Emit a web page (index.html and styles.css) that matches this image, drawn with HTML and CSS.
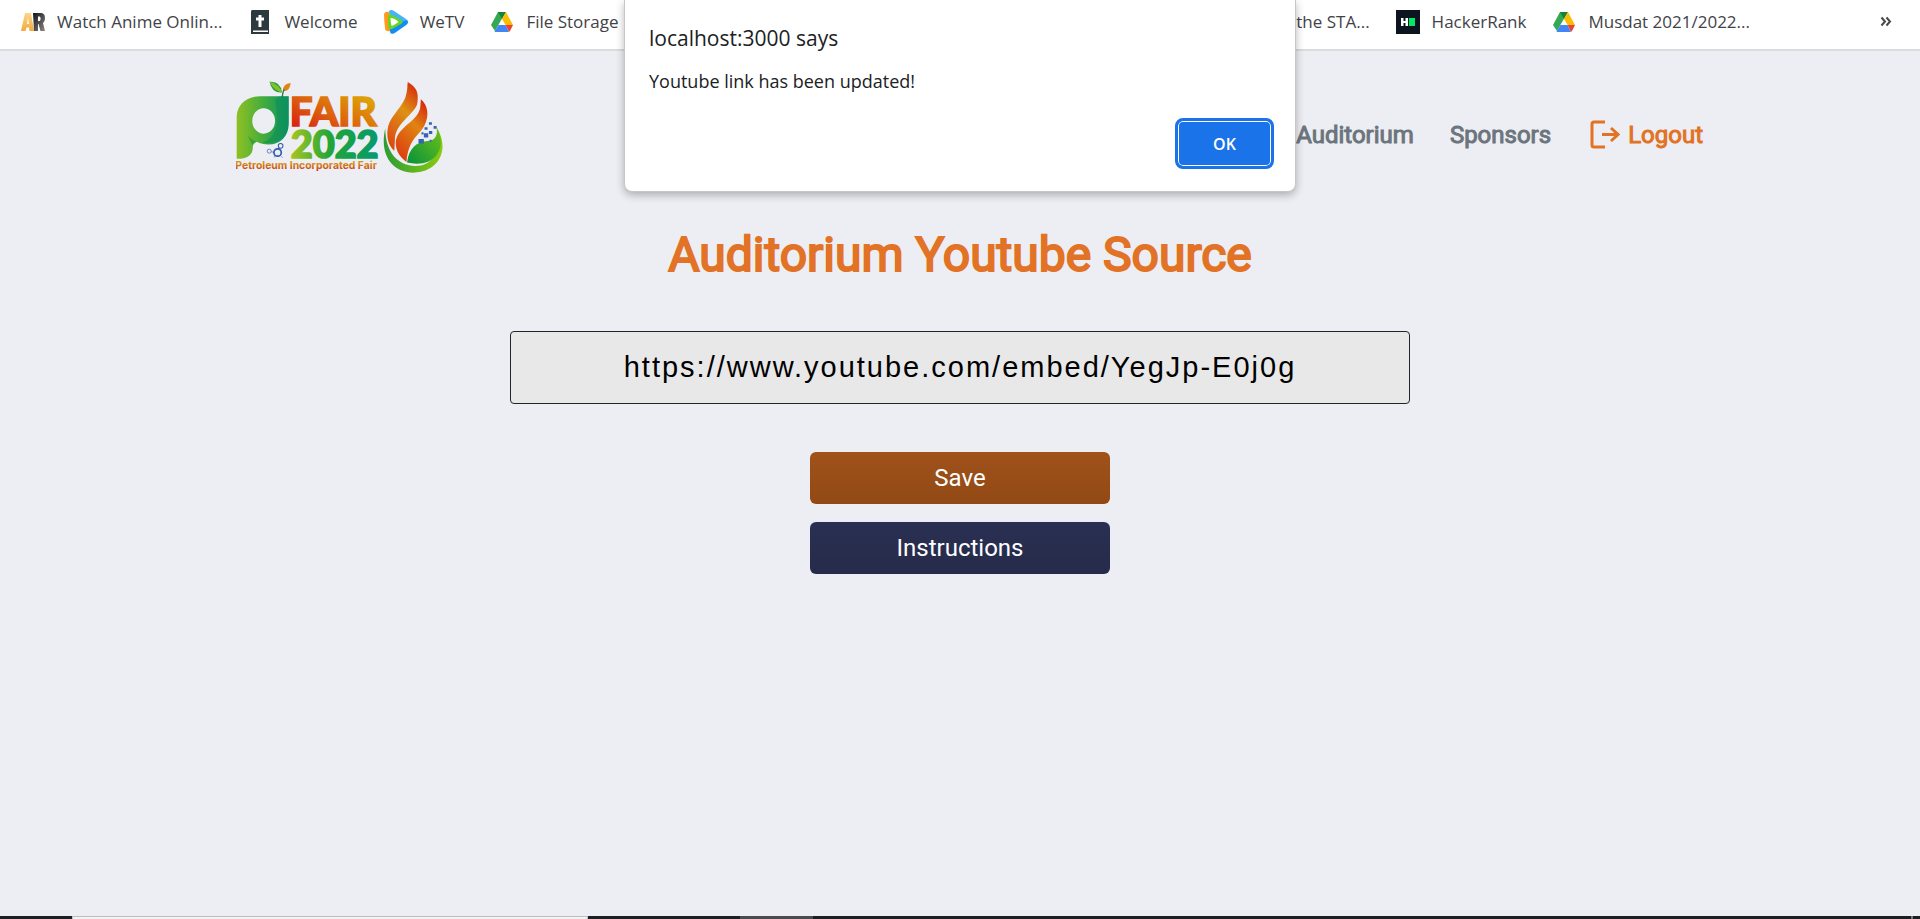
FILE: index.html
```html
<!DOCTYPE html>
<html lang="en">
<head>
<meta charset="utf-8">
<title>PI Fair 2022</title>
<link rel="stylesheet" href="styles.css">
</head>
<body>
<nav class="bookmarks" aria-label="Bookmarks">
  <a class="bookmark" href="#">
    <svg class="favicon" viewBox="0 0 24 24"><defs><linearGradient id="ga" x1="0" y1="0" x2="0" y2="1"><stop offset="0" stop-color="#fbd58e"/><stop offset="1" stop-color="#f5a93a"/></linearGradient><linearGradient id="gr" x1="0" y1="0" x2="1" y2="1"><stop offset="0" stop-color="#111"/><stop offset="1" stop-color="#888"/></linearGradient></defs><path fill="url(#ga)" fill-rule="evenodd" d="M4 3h6l3 18H8.500l-.4-3.500H5.500L4.500 21H0zM7 7.500L6 14h2z"/><path fill="url(#gr)" fill-rule="evenodd" d="M12 3h7c4 0 5 2 5 5 0 2.500-.7 4-2 5l2 8h-4.500l-2-7H17v7h-4zm5 3.500V11h1.500c1.500 0 1.500-4.500 0-4.500z"/></svg>
    <span>Watch Anime Onlin...</span></a>
  <a class="bookmark" href="#">
    <svg class="favicon" viewBox="0 0 24 24"><path fill="#2c393f" d="M4 0h17v24H3V2q0-2 1-2z"/><path fill="#fff" d="M10.500 5h3v2.500H16v3h-2.500V17h-3v-6.500H8v-3h2.500zM5 20.500h15V22H5z"/></svg>
    <span>Welcome</span></a>
  <a class="bookmark" href="#">
    <svg class="favicon" viewBox="0 0 24 24"><path fill="#ff9a1f" d="M0 4q1-3 5-2l2 19q-6 1-6-3Q0 10 0 4z"/><path fill="#42b4f7" d="M5 1q2-2 5 0l12 8q4 3 0 6l-11 8q-3 2-4-1z"/><path fill="#118df5" d="M6 17l17-7q2 3-1 5l-12 8q-4 2-4-2z"/><path fill="#6dd321" d="M4 7q0-4 4-2l9 5q3 2 0 4l-9 5q-4 1-4-2z"/><path fill="#fff" d="M6.500 8q4 0 8 4-4 3-7 4-1-4-1-8z"/></svg>
    <span>WeTV</span></a>
  <a class="bookmark" href="#">
    <svg class="favicon" viewBox="0 0 24 24"><use href="#drive"/></svg>
    <span>File Storage</span></a>
  <a class="bookmark bookmark-far" href="#"><span>the STA...</span></a>
  <a class="bookmark" href="#">
    <svg class="favicon" viewBox="0 0 24 24"><path fill="#0b141f" d="M0 0h24v24H0z"/><path fill="#fff" d="M5 8h2.500v3h2V8H12v8H9.500v-3h-2v3H5z"/><path fill="#00ea64" d="M13 8h6v8h-6z"/></svg>
    <span>HackerRank</span></a>
  <a class="bookmark" href="#">
    <svg class="favicon" viewBox="0 0 24 24"><g id="drive"><path fill="#34a853" d="M8 2h4l2 3L5 21l-4-6z"/><path fill="#188038" d="M8 2h8l-4 7z"/><path fill="#fbbc04" d="M16 2l7 13h-7.500L12 9z"/><path fill="#4285f4" d="M8.500 15h7l3.500 7H6q-1 0-1.500-.5z"/><path fill="#ea4335" d="M15.500 15H23l-3 6q-.5.700-1 .8z"/></g></svg>
    <span>Musdat 2021/2022...</span></a>
  <button class="overflow" type="button" aria-label="More bookmarks"><svg viewBox="0 0 12 12"><path d="M1.500 1.500L5 5.500l-3.500 4M6.500 1.500l3.500 4-3.500 4"/></svg></button>
</nav>

<header class="site-header">
  <svg class="logo" viewBox="50 30 620 280" role="img" aria-label="PI Fair 2022">
    <defs>
      <linearGradient id="p" x1="0" y1="0" x2="1" y2="0"><stop offset="0" stop-color="#8fc024"/><stop offset=".5" stop-color="#45ad3b"/><stop offset="1" stop-color="#079368"/></linearGradient>
      <linearGradient id="f" x1="0" y1="1" x2="1" y2="0"><stop offset="0" stop-color="#d80b0b"/><stop offset=".4" stop-color="#dd5b10"/><stop offset=".8" stop-color="#dda106"/></linearGradient>
      <linearGradient id="y" x1="0" y1="0" x2="1" y2="0"><stop offset="0" stop-color="#a8c520"/><stop offset=".45" stop-color="#22a536"/><stop offset="1" stop-color="#06996f"/></linearGradient>
      <linearGradient id="t" x1="0" y1="0" x2="0" y2="1"><stop offset=".3" stop-color="#d49316"/><stop offset="1" stop-color="#c81e18"/></linearGradient>
      <linearGradient id="fl" x1=".7" y1="0" x2=".3" y2="1"><stop offset="0" stop-color="#d8340e"/><stop offset=".4" stop-color="#dd9214"/><stop offset="1" stop-color="#dc4a10"/></linearGradient>
      <linearGradient id="fm" x1=".8" y1="0" x2=".3" y2="1"><stop offset="0" stop-color="#d8280c"/><stop offset=".4" stop-color="#e08412"/><stop offset="1" stop-color="#dc3f10"/></linearGradient>
      <linearGradient id="b" x1="0" y1="0" x2="1" y2="0"><stop offset="0" stop-color="#2d9b35"/><stop offset="1" stop-color="#8acb10"/></linearGradient>
      <linearGradient id="l" x1="0" y1="1" x2="1" y2="0"><stop offset="0" stop-color="#07913a"/><stop offset="1" stop-color="#6fc21a"/></linearGradient>
    </defs>
    <path fill="url(#p)" fill-rule="evenodd" d="M52 265V142c0-38 27-64 71-64h84v82c0 37-24 62-60 62-14 0-25-3-35-8-8 3-12 8-12 17 0 22-15 34-48 34zM132 114a34 38 0 1 0 1 76 34 38 0 0 0-1-76z"/>
    <path fill="#0f8f58" d="M167 93q4-14 14-14h26v82q-2 38-38 53-20 8-40 2 40-12 44-66 0-32-6-57z" opacity=".6"/>
    <path fill="#299b35" d="M86 196q10 12 26 18-8 3-12 11-8-12-14-29z" opacity=".7"/>
    <path fill="#299e45" d="M150 35q34-2 37 32-31 2-37-32z"/><path fill="#83c229" d="M150 35q28 7 37 32-25-6-37-32z"/>
    <path fill="#e38317" d="M213 39q-3 27-23 23 0-21 23-23z"/><path fill="none" stroke="#267c3b" stroke-width="4" d="M188 82q1-17 6-24"/>
    <g fill="none" stroke="#3159ad"><circle cx="174" cy="246" r="11" stroke-width="5"/><circle cx="149" cy="242" r="6" stroke-width="2"/><circle cx="183" cy="226" r="7" stroke-width="3"/><path stroke-width="2" d="M155 244l8 1m16-12l-3 3m-9 21l-4 3m22-2l4 3"/></g>
    <text class="logo-big" x="210" y="166" fill="url(#f)" stroke="url(#f)">FAIR</text>
    <text class="logo-year" x="213" y="263" fill="url(#y)" stroke="url(#y)">2022</text>
    <text class="logo-small" x="48" y="296" fill="url(#t)">Petroleum Incorporated Fair</text>
    <path fill="url(#b)" d="M495 174c-18 76 18 131 84 132 74-1 111-67 69-135 20 54-1 99-43 113-60 12-110-28-110-110z"/>
    <path fill="url(#l)" d="M560 276c5-42 28-62 62-64 25-3 29-21 26-41 24 44 12 84-24 102-20 8-42 8-64 3z"/>
    <path fill="url(#fl)" d="M562 36c26 16 34 30 28 66-10 30-60 54-66 98l-2 41c-18-16-26-43-18-75 10-34 48-60 54-96 4-14 2-24 4-34z"/>
    <path fill="url(#fm)" d="M601 87c20 17 27 47 10 80-16 30-46 36-53 107-16-11-32-31-32-56 2-49 64-62 73-105z"/>
    <path fill="#3564b4" d="M594 206h16v13h-16zm16-17h13v12h-13zm2-18h9v7h-9zm13 11h10v9h-10zm14-15h9v8h-9zm-14-11h9v7h-9zm-22 30h6v6h-6zm24 22h6v6h-6z"/>
  </svg>
  <nav class="menu" aria-label="Main">
    <a href="#">Auditorium</a>
    <a href="#">Sponsors</a>
    <a class="logout" href="#"><svg viewBox="0 0 30 30"><path d="M15 2H4q-2 0-2 2v21q0 2 2 2h11M12 14.500h15M21 8l7 6.500L21 21"/></svg>Logout</a>
  </nav>
</header>

<main class="content">
  <h1>Auditorium Youtube Source</h1>
  <form class="source-form">
    <input class="source" type="text" aria-label="Youtube link" value="https://www.youtube.com/embed/YegJp-E0j0g">
    <button class="action save" type="button">Save</button>
    <button class="action instructions" type="button">Instructions</button>
  </form>
</main>

<footer class="taskbar"><span class="task-search"></span><span class="task-active"></span><span class="task-edge"></span></footer>

<section class="dialog" role="alertdialog" aria-labelledby="dialog-title" aria-describedby="dialog-text">
  <h2 id="dialog-title">localhost:3000 says</h2>
  <p id="dialog-text">Youtube link has been updated!</p>
  <button class="ok" type="button">OK</button>
</section>
</body>
</html>
```
FILE: styles.css
```css
* { box-sizing: border-box; }

body {
  margin: 0;
  min-height: 100vh;
  display: flex;
  flex-direction: column;
  background: #edeef3;
  font-family: Roboto, "Liberation Sans", sans-serif;
  overflow: hidden;
}

a { color: inherit; text-decoration: none; }
button { border: 0; font: inherit; cursor: pointer; }

.bookmarks {
  display: flex;
  align-items: center;
  gap: 26px;
  padding: 0 28px 6px 21px;
  height: 51px;
  background: #fff;
  border-bottom: 2px solid #d9dbde;
  color: #3f4347;
  font: 17px/24px "Open Sans", "Noto Sans", sans-serif;
  white-space: nowrap;
}
.bookmark { display: flex; align-items: center; gap: 12px; }
.bookmark-far { margin-left: auto; }
.favicon { width: 24px; height: 24px; flex: none; }
.overflow { margin-left: 104px; padding: 0; background: none; display: flex; }
.overflow svg { width: 12px; height: 12px; fill: none; stroke: #45494d; stroke-width: 2; }

.site-header {
  display: flex;
  justify-content: space-between;
  align-items: center;
  padding: 29px 217px 0 236px;
}
.logo { width: 208px; height: 94px; }
.logo-big { font: 900 120px Lato, sans-serif; stroke-width: 5px; }
.logo-year { font: 900 113px Lato, sans-serif; stroke-width: 5px; }
.logo-small { font: 700 31px Inter, sans-serif; }

.menu {
  display: flex;
  align-items: center;
  gap: 36px;
  padding-top: 16px;
  color: #6c757d;
  font-size: 24px;
  line-height: 32px;
  -webkit-text-stroke: 1px;
}
.logout { display: flex; align-items: center; gap: 8px; margin-left: 3px; color: #e27225; }
.logout svg { width: 30px; height: 30px; fill: none; stroke: currentColor; stroke-width: 3; }

.content {
  flex: 1;
  display: flex;
  flex-direction: column;
  align-items: center;
  padding: 52px 24px 24px;
}
h1 {
  margin: 0;
  color: #e27225;
  font-size: 48px;
  font-weight: 400;
  line-height: 58px;
  -webkit-text-stroke: 2px;
}
.source-form {
  width: 100%;
  max-width: 900px;
  display: flex;
  flex-direction: column;
  align-items: center;
  margin-top: 47px;
}
.source {
  width: 100%;
  height: 73px;
  padding: 0 16px;
  margin-bottom: 48px;
  border: 1px solid #212529;
  border-radius: 4px;
  background: #e8e8e8;
  color: #000;
  font: 29px/36px "Liberation Sans", Arial, sans-serif;
  letter-spacing: 2px;
  text-align: center;
}
.action {
  width: 300px;
  padding: 10px;
  border-radius: 6px;
  color: #fff;
  font-size: 24px;
  line-height: 32px;
}
.save { margin-bottom: 18px; background: linear-gradient(#a0521a, #924915); }
.instructions { background: linear-gradient(#2a3052, #262b4b); }

.taskbar { height: 3px; display: flex; background: #1d1e22; }
.task-search { width: 516px; margin-left: 72px; background: #f2f2f2; border: 1px solid #bdbdbd; border-bottom: 0; }
.task-active { width: 73px; margin-left: 152px; background: #4b4b4d; }
.task-edge { width: 2px; margin: 0 7px 0 auto; background: #777; }

.dialog {
  position: absolute;
  top: 0;
  left: 50%;
  transform: translateX(-50%);
  width: 672px;
  padding: 22px 21px 22px 24px;
  display: flex;
  flex-direction: column;
  border: 1px solid #c4c6c9;
  border-top: 0;
  border-radius: 0 0 8px 8px;
  background: #fff;
  box-shadow: 0 3px 8px rgb(0 0 0 / 28%);
  color: #202124;
  font-family: "Open Sans", "Noto Sans", sans-serif;
}
.dialog h2 { margin: 0; font-size: 21px; font-weight: 400; line-height: 32px; }
.dialog p { margin: 14px 0 24px; font-size: 18px; line-height: 26px; }
.ok {
  align-self: flex-end;
  width: 99px;
  height: 51px;
  border: 3px solid #1a73e8;
  border-radius: 8px;
  background: #1a73e8;
  box-shadow: inset 0 0 0 1px #fff;
  color: #fff;
  font-size: 16px;
  font-weight: 600;
}
```
